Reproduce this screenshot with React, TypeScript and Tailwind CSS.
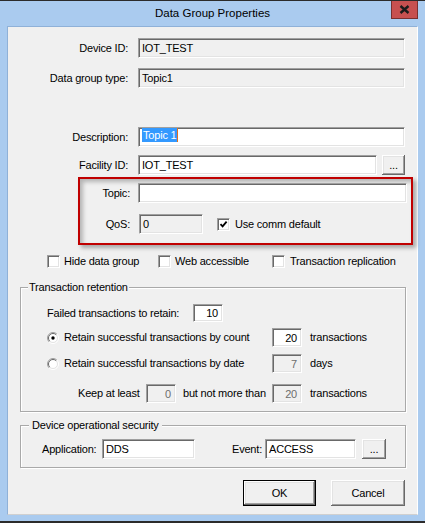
import React from 'react';

// sunken 3D edge, used by edits and check boxes
const sunken =
  'border border-t-[#a0a0a0] border-l-[#a0a0a0] border-b-white border-r-white shadow-[inset_1px_1px_0_#696969,inset_-1px_-1px_0_#e3e3e3]';

// raised 3D edge for push buttons
const raised =
  'bg-[#f0f0f0] shadow-[inset_-1px_-1px_0_#696969,inset_1px_1px_0_#ffffff,inset_-2px_-2px_0_#a0a0a0,inset_2px_2px_0_#e3e3e3]';

interface EditProps {
    size: string;
    value?: string;
    gray?: boolean;
    dim?: boolean;
    right?: boolean;
    className?: string;
}

function Edit({ size, value, gray, dim, right, className = '' }: EditProps) {
    return (
        <div
            className={`${sunken} ${size} ${gray ? 'bg-[#f0f0f0]' : 'bg-white'} ${dim ? 'text-[#6d6d6d]' : 'text-black'} ${right ? 'justify-end pr-[4px]' : 'pl-[3px]'} flex items-center shrink-0 leading-[14px] whitespace-nowrap ${className}`}
        >
            {value}
        </div>
    );
}

function Check({ checked }: { checked?: boolean }) {
    return (
        <div className={`${sunken} bg-white w-[13px] h-[13px] shrink-0 flex items-center justify-center`}>
            {checked && (
                <svg width="9" height="9" viewBox="0 0 9 9">
                    <path d="M1.5 4.2 L3.6 6.4 L7.6 1.6" stroke="#000" strokeWidth="1.8" fill="none" />
                </svg>
            )}
        </div>
    );
}

function Radio({ checked }: { checked?: boolean }) {
    return (
        <svg width="12" height="12" viewBox="0 0 12 12" className="shrink-0">
            <circle cx="6" cy="6" r="5" fill="#fff" />
            <path d="M2.1 9.9 A5.5 5.5 0 0 1 9.9 2.1" stroke="#a0a0a0" strokeWidth="1" fill="none" />
            <path d="M9.9 2.1 A5.5 5.5 0 0 1 2.1 9.9" stroke="#ffffff" strokeWidth="1" fill="none" />
            <path d="M2.8 9.2 A4.5 4.5 0 0 1 9.2 2.8" stroke="#696969" strokeWidth="1" fill="none" />
            <path d="M9.2 2.8 A4.5 4.5 0 0 1 2.8 9.2" stroke="#e3e3e3" strokeWidth="1" fill="none" />
            {checked && <circle cx="6" cy="6" r="1.7" fill="#000" />}
        </svg>
    );
}

export default function App() {
    return (
        <div className="relative w-[425px] h-[523px] overflow-hidden bg-[#aacbef] border-t border-t-[#2b2b2b] border-b-2 border-b-[#2b2b2b] font-['Liberation_Sans',Arial,sans-serif] text-[11px] tracking-[-0.2px] text-black">
            {/* Barra de título */}
            <div className="h-[25px] flex items-center justify-center text-[11.5px] tracking-normal">
                Data Group Properties
            </div>
            <div className="absolute top-0 right-[7px] w-[27px] h-[18px] bg-[#c75050] border border-t-0 border-[#7a3030] flex items-center justify-center">
                <svg width="11" height="9" viewBox="0 0 11 9">
                    <path d="M1.5 1 L9.5 8 M9.5 1 L1.5 8" stroke="#1b1b1b" strokeWidth="2.4" />
                </svg>
            </div>

            {/* Área cliente */}
            <div className="ml-[7px] w-[411px] h-[489px] bg-[#f0f0f0] border border-t-[#8fb1d8] border-l-[#8fb1d8] border-r-white border-b-[#d0d0d0] flex flex-col">
                <div className="flex items-center mt-[11px] h-[20px]">
                    <span className="w-[120px] text-right">Device ID:</span>
                    <Edit size="w-[267px] h-[20px]" className="ml-[10px]" value="IOT_TEST" gray />
                </div>
                <div className="flex items-center mt-[10px] h-[20px]">
                    <span className="w-[120px] text-right">Data group type:</span>
                    <Edit size="w-[267px] h-[20px]" className="ml-[10px]" value="Topic1" gray />
                </div>

                <div className="flex items-center mt-[39px] h-[20px]">
                    <span className="w-[120px] text-right">Description:</span>
                    <div className={`${sunken} bg-white ml-[10px] w-[267px] h-[20px] pl-[3px] flex items-start leading-[14px]`}>
                        <span className="bg-[#3399ff] text-white px-[1px]">Topic 1</span>
                        <span className="w-px h-[14px] bg-[#e07020]" />
                    </div>
                </div>
                <div className="flex items-center mt-[8px] h-[20px]">
                    <span className="w-[120px] text-right">Facility ID:</span>
                    <Edit size="w-[239px] h-[20px]" className="ml-[10px]" value="IOT_TEST" />
                    <div className={`${raised} ml-[5px] w-[23px] h-[20px] flex items-end justify-center pb-[4px] leading-none`}>...</div>
                </div>

                {/* Recuadro rojo */}
                <div className="ml-[70px] mt-[2px] w-[335px] h-[68px] border-2 border-[#c00000] shadow-[3px_3px_4px_rgba(0,0,0,0.3),inset_3px_3px_4px_rgba(0,0,0,0.25)] flex flex-col">
                    <div className="flex items-center mt-[4px] h-[20px]">
                        <span className="w-[50px] text-right">Topic:</span>
                        <Edit size="w-[269px] h-[20px]" className="ml-[8px]" />
                    </div>
                    <div className="flex items-center mt-[11px] h-[20px]">
                        <span className="w-[50px] text-right">QoS:</span>
                        <Edit size="w-[64px] h-[20px]" className="ml-[9px]" value="0" gray />
                        <div className="ml-[14px]">
                            <Check checked />
                        </div>
                        <span className="ml-[5px]">Use comm default</span>
                    </div>
                </div>

                <div className="flex items-center mt-[10px] h-[13px] ml-[39px]">
                    <div className="w-[111px] flex items-center">
                        <Check />
                        <span className="ml-[4px]">Hide data group</span>
                    </div>
                    <div className="w-[114px] flex items-center">
                        <Check />
                        <span className="ml-[4px]">Web accessible</span>
                    </div>
                    <div className="flex items-center">
                        <Check />
                        <span className="ml-[5px]">Transaction replication</span>
                    </div>
                </div>

                {/* Transaction retention */}
                <div className="relative ml-[12px] mt-[19px] w-[386px] h-[125px] border border-[#a9a9a9] shadow-[1px_1px_0_#fff,inset_1px_1px_0_#fff] flex flex-col">
                    <span className="absolute -top-[8px] left-[7px] px-[1px] bg-[#f0f0f0] leading-[14px]">Transaction retention</span>
                    <div className="flex items-center mt-[16px] h-[18px] ml-[26px]">
                        <span className="w-[146px]">Failed transactions to retain:</span>
                        <Edit size="w-[30px] h-[18px]" value="10" right />
                    </div>
                    <div className="flex items-center mt-[6px] h-[19px] ml-[26px]">
                        <Radio checked />
                        <span className="ml-[5px] w-[208px]">Retain successful transactions by count</span>
                        <Edit size="w-[30px] h-[19px]" value="20" right />
                        <span className="ml-[8px]">transactions</span>
                    </div>
                    <div className="flex items-center mt-[7px] h-[19px] ml-[26px]">
                        <Radio />
                        <span className="ml-[5px] w-[208px]">Retain successful transactions by date</span>
                        <Edit size="w-[30px] h-[19px]" value="7" right gray dim />
                        <span className="ml-[8px]">days</span>
                    </div>
                    <div className="flex items-center mt-[11px] h-[19px] ml-[57px]">
                        <span className="w-[68px]">Keep at least</span>
                        <Edit size="w-[30px] h-[19px]" value="0" right gray dim />
                        <span className="ml-[7px] w-[89px]">but not more than</span>
                        <Edit size="w-[30px] h-[19px]" value="20" right gray dim />
                        <span className="ml-[8px]">transactions</span>
                    </div>
                </div>

                {/* Device operational security */}
                <div className="relative ml-[12px] mt-[13px] w-[386px] h-[43px] border border-[#a9a9a9] shadow-[1px_1px_0_#fff,inset_1px_1px_0_#fff] flex flex-col">
                    <span className="absolute -top-[8px] left-[8px] px-[3px] bg-[#f0f0f0] leading-[14px]">Device operational security</span>
                    <div className="flex items-center mt-[13px] h-[20px] ml-[21px]">
                        <span className="w-[60px]">Application:</span>
                        <Edit size="w-[93px] h-[20px]" value="DDS" />
                        <span className="w-[70px] text-right pr-[3px]">Event:</span>
                        <Edit size="w-[91px] h-[20px]" value="ACCESS" />
                        <div className={`${raised} ml-[6px] w-[24px] h-[20px] flex items-end justify-center pb-[4px] leading-none`}>...</div>
                    </div>
                </div>

                <div className="flex items-center mt-[12px] h-[26px] ml-[235px]">
                    <div className={`${raised} w-[73px] h-[26px] border border-black flex items-center justify-center`}>OK</div>
                    <div className={`${raised} ml-[15px] w-[74px] h-[26px] flex items-center justify-center`}>Cancel</div>
                </div>
            </div>
        </div>
    );
}
